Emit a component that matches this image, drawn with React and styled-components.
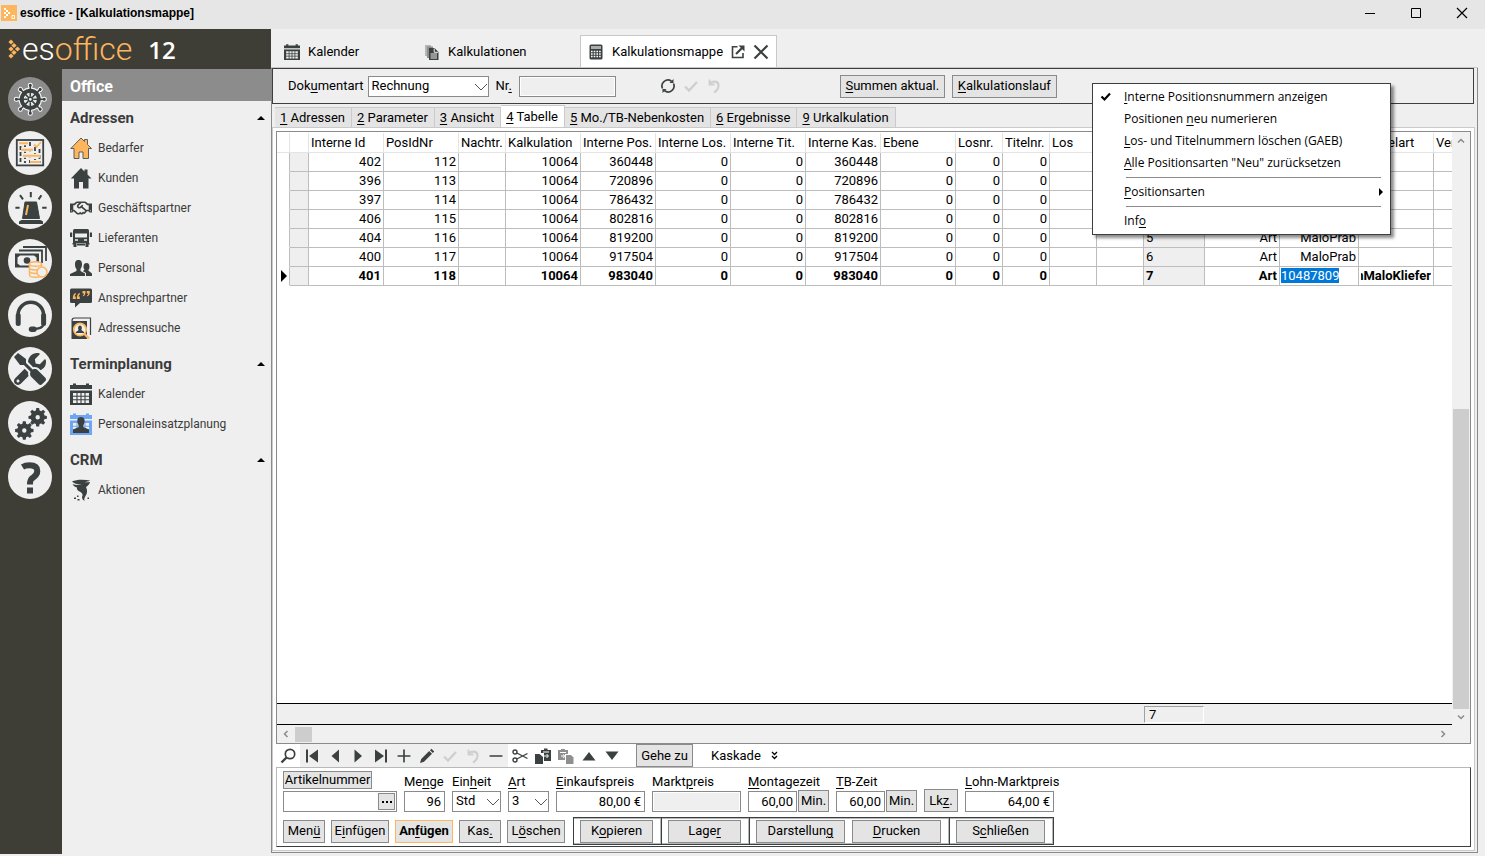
import React, { useState } from "react";
import styled, { createGlobalStyle, css } from "styled-components";
import { FaTools, FaRegHandshake } from "react-icons/fa";
import { Minus, Plus, Square, X } from "lucide-react";

const DARK = "#3b4140";
const ORANGE = "#fdb55e";

/* "&" marks the access key, as in the menu resources */
const Mnemonic = ({ text }) => {
  const at = text.indexOf("&");
  if (at < 0) return text;
  return (
    <span>
      {text.slice(0, at)}
      <u>{text[at + 1]}</u>
      {text.slice(at + 2)}
    </span>
  );
};

const Chevron = () => (
  <svg width="14" height="8" viewBox="0 0 14 8" fill="none" stroke="#555" strokeWidth="1">
    <path d="M1 1l6 6 6-6" />
  </svg>
);

const Gear = ({ cx, cy }) => (
  <g transform={`translate(${cx} ${cy})`}>
    <circle r="4.6" fill="none" stroke={DARK} strokeWidth="4.8" />
    {[0, 45, 90, 135, 180, 225, 270, 315].map((a) => (
      <path key={a} d="M-1.9 -6.4L-1.4 -9.2H1.4L1.9 -6.4Z" fill={DARK} transform={`rotate(${a})`} />
    ))}
  </g>
);

const WheelIcon = () => (
  <svg viewBox="0 0 44 44">
    {["#f4f4f4", DARK].map((color, i) => (
      <g key={color} stroke={color} fill="none" transform="translate(22.3 22.3)">
        <circle r="8.6" strokeWidth={i ? 4 : 6.2} />
        {[0, 45, 90, 135, 180, 225, 270, 315].map((a) => (
          <g key={a} transform={`rotate(${a})`}>
            <path d="M0 -3V-14" strokeWidth={i ? 1.6 : 3.8} />
            <circle cy="-14" r="0.8" strokeWidth={i ? 1.4 : 3.4} />
          </g>
        ))}
        <circle r="2.2" strokeWidth={i ? 1.6 : 3} />
      </g>
    ))}
    <circle cx="22.3" cy="22.3" r="1" fill="#f4f4f4" />
  </svg>
);

const PlanIcon = () => (
  <svg viewBox="0 0 44 44" fill="none">
    <rect x="8.8" y="9" width="26.4" height="25.4" stroke={DARK} strokeWidth="1.8" />
    <path d="M12.5 15V32M17 12V32M22 11V32M27 16V32M31.5 18V32" stroke={DARK} strokeWidth="1.8" strokeDasharray="4 2" />
    <path d="M11 12.2H20M13 18.7H25M15 24.8H32M22 31H32" stroke="#efefef" strokeWidth="4" />
    <path d="M11 12.2H20M13 18.7H25M15 24.8H32M22 31H32" stroke={ORANGE} strokeWidth="2" />
    <path d="M26 13.5L28.5 16L33 11" stroke={ORANGE} strokeWidth="1.8" />
  </svg>
);

const SirenIcon = () => (
  <svg viewBox="0 0 44 44" fill="none">
    <path d="M17 17H28.5L31.5 33.5H14.5Z" fill={DARK} stroke={DARK} strokeLinejoin="round" />
    <path d="M11 39V36.5L13.5 35H32.5L35 36.5V39Z" fill={DARK} />
    <path d="M20 20L18 30" stroke={ORANGE} strokeWidth="2" />
    <path d="M22.8 7V12.2M12 10.2L15 14.4M33.4 10.2L30.6 14.4M7.4 22.8H11.6M34.2 22.8H38.6" stroke={DARK} strokeWidth="2" />
  </svg>
);

const MoneyIcon = () => (
  <svg viewBox="0 0 44 44" fill="none">
    <path d="M15 8H38V22M11 11.5H34V24" stroke={DARK} strokeWidth="1.8" />
    <rect x="7" y="14.5" width="24" height="14" fill={DARK} />
    <path d="M9.5 18.5L12 16.5H26L28.5 18.5V24.5L26 26.5H12L9.5 24.5Z" fill="#efefef" />
    <circle cx="19" cy="21.5" r="3.3" fill={DARK} />
    <g fill="#efefef" stroke={ORANGE} strokeWidth="1.5">
      <path d="M21.5 25V36C21.5 39 33.5 39 33.5 36V25" />
      <ellipse cx="27.5" cy="25" rx="6" ry="2.3" />
      <path d="M21.5 29C21.5 31.5 33.5 31.5 33.5 29M21.5 32.5C21.5 35 33.5 35 33.5 32.5" fill="none" />
      <circle cx="34" cy="33" r="5" />
    </g>
  </svg>
);

const HeadsetIcon = () => (
  <svg viewBox="0 0 44 44" fill="none" stroke={DARK}>
    <path d="M10 27V22A12.8 12.8 0 0 1 35.6 22V27" strokeWidth="3.6" />
    <path d="M10.2 22.5V30.5M35.6 22.5V30.5" strokeWidth="5" strokeLinecap="round" />
    <path d="M35.6 31C35 35 30 36 25 36" strokeWidth="2.2" />
    <path d="M23.5 36.2H26" strokeWidth="5.4" strokeLinecap="round" />
  </svg>
);

const ToolsIcon = () => <FaTools size={32} color={DARK} />;

const GearsIcon = () => (
  <svg viewBox="0 0 44 44">
    <Gear cx={29.7} cy={16.3} />
    <Gear cx={16.3} cy={29.5} />
  </svg>
);

const HelpIcon = () => (
  <svg viewBox="0 0 44 44" fill="none" stroke={DARK} strokeWidth="6">
    <path d="M14.5 12C17 10.5 19 10.3 21.5 10.3C27 10.3 29.3 12.5 29.3 16C29.3 20 27 21.3 24.5 23C22.5 24.5 22 25.5 22 29.5" />
    <path d="M22 32.5V38.5" />
  </svg>
);

const House = ({ fill }) => (
  <svg viewBox="0 0 22 22">
    <path
      d="M11 1L0.8 11.5H4V21.5H9V15H13V21.5H18.5V11.5H21.5L17.5 7.5V2.5H14.5V4.5Z"
      fill={fill}
      stroke={DARK}
      strokeWidth={fill === ORANGE ? 0.8 : 0}
    />
  </svg>
);

const TruckIcon = () => (
  <svg viewBox="0 0 22 22" fill={DARK}>
    <path d="M4.5 2H17.5Q19 2 19 3.5V16H3V3.5Q3 2 4.5 2Z" />
    <path d="M5 6.5H17V10.5H5Z" fill="#efefef" />
    <path d="M5 13H8M14 13H17" stroke="#efefef" strokeWidth="1.5" />
    <path d="M0 5.5H2.2V10H0ZM19.8 5.5H22V10H19.8ZM2.5 16H6.5V20H3.5V17.5H2.5ZM15.5 16H19.5V17.5H18.5V20H15.5ZM7 16.5H15V18.5H7Z" />
  </svg>
);

const StaffIcon = () => (
  <svg viewBox="0 0 22 22" fill={DARK}>
    <path d="M8.5 3C11.3 3 12 5 12 7.5C12 10 11 11 10.5 12V14L15 16.5V19H0V17L6.5 14V12C5.5 11 5 10 5 7.5C5 5 5.7 3 8.5 3Z" />
    <path d="M16.5 6C19 6 19.5 8 19.5 10C19.5 12 18.5 12.5 18.3 13.5L22 16.5V19H16V16L13 14.2L14.5 12.5C13.5 11.5 13.5 10.5 13.5 9.5C13.5 7.5 14.5 6 16.5 6Z" />
  </svg>
);

const QuoteIcon = () => (
  <svg viewBox="0 0 22 22">
    <path d="M1.5 1.5H20.5Q22 1.5 22 3V14.5Q22 16 20.5 16H10L5 20.5V16H1.5Q0 16 0 14.5V3Q0 1.5 1.5 1.5Z" fill={DARK} />
    <path d="M5.5 6C3.5 7 2.8 8.5 2.8 12H5.8V9.5H4.5Q4.7 8 6 7ZM9.5 6C7.5 7 6.8 8.5 6.8 12H9.8V9.5H8.5Q8.7 8 10 7ZM12.5 4H15.5C15.5 7.5 15 8.5 12.8 9.5V8.5Q14 8 14 6.5H12.5ZM16.8 4H19.8C19.8 7.5 19.3 8.5 17 9.5V8.5Q18.3 8 18.3 6.5H16.8Z" fill={ORANGE} />
  </svg>
);

const SearchCardIcon = () => (
  <svg viewBox="0 0 22 22" fill="none">
    <path d="M2 4Q2 1 4.5 1H20.5V18" stroke={DARK} strokeWidth="1.2" />
    <path d="M1.5 4H17V22H1.5Z" fill={DARK} />
    <circle cx="10" cy="12.5" r="6.2" fill="#efefef" stroke={ORANGE} strokeWidth="1.8" />
    <path d="M14.5 17L19 21.5" stroke={ORANGE} strokeWidth="2.4" />
    <path d="M10 8.5C12 8.5 12.3 11.5 11.3 13L14 15V16H6V15L8.7 13C7.7 11.5 8 8.5 10 8.5Z" fill={DARK} />
  </svg>
);

const CalendarIcon = ({ color = DARK, person }) => (
  <svg viewBox="0 0 22 22" fill={color}>
    <path d="M0 2H3V0.5H6V2H16V0.5H19V2H22V6H0Z" />
    <path d="M0 7.5H22V22H0Z" />
    <path d="M3 10H19V20H3Z" fill="#efefef" />
    <path d="M2 13.3H20M2 16.7H20M7 9V21M11 9V21M15 9V21" stroke={color} strokeWidth="1.1" />
    {person && (
      <path
        d="M11 4C14.5 4 15 7 14.5 9.5C14 11.5 13.2 12 13.2 14L19 16.5V20H3V16.5L8.8 14C8.8 12 8 11.5 7.5 9.5C7 7 7.5 4 11 4Z"
        fill={DARK}
      />
    )}
  </svg>
);

const TornadoIcon = () => (
  <svg viewBox="0 0 22 22" fill={DARK}>
    <path d="M2 2.5C6 0.6 14 0.4 20 1.6C19 2.6 16 3 14 3.2C16.500 3.400 18.500 3.200 20 3C19.500 5.500 17.500 7 16 8C17.500 11 17.500 14.500 15.500 17C14.500 18.500 14 20 14.500 22C12 20.500 11.500 18.500 12.500 16.500C13 15 11.500 13.500 9.500 12.500C7.500 11.500 6.500 10 7 8.500C5 8 3 6.500 2.500 5C5 6 9 6.200 11.500 5.800C7.500 5.600 3.500 4.500 2 2.500Z" />
    <path d="M4 18.500H6V20H4ZM7.500 20H9.500V21.500H7.500ZM7 16.500H8.500V18H7ZM17.500 18.500H19V20H17.500Z" />
  </svg>
);

const CopyDocIcon = () => (
  <svg viewBox="0 0 16 16">
    <path d="M1 1H7V12H1Z" fill="#b5b5b5" />
    <path d="M3 2.5H9V14H3Z" fill="#8c8f8e" />
    <path d="M5 4H10.5L14.5 8V16H5Z" fill={DARK} />
    <path d="M10.2 4.5V8.3H14M6.5 10H13M6.5 12H13M6.5 14H13" stroke="#efefef" fill="none" />
  </svg>
);

const CalculatorIcon = () => (
  <svg viewBox="0 0 16 16">
    <rect x="1.5" y="0.5" width="13" height="15" rx="1.5" fill={DARK} />
    <path d="M3 2H13V5H3Z" fill="#a9adac" />
    <path d="M3 7.5H13M3 10H13M3 12.5H13" stroke="#fff" strokeWidth="1.5" strokeDasharray="1.6 1.1" />
  </svg>
);

const RefreshIcon = () => (
  <svg viewBox="0 0 16 16" fill="none" stroke={DARK} strokeWidth="1.7">
    <path d="M2.5 10.5A6 6 0 0 1 11.5 3.2M13.5 5.5A6 6 0 0 1 4.5 12.8" />
    <path d="M9.5 5H13.5V1ZM6.5 11H2.5V15Z" fill={DARK} stroke="none" />
  </svg>
);

const CheckIcon = () => (
  <svg viewBox="0 0 16 16" fill="none" stroke="#cfcfcf" strokeWidth="2.4">
    <path d="M2 8.5L6 12.5L14 4" />
  </svg>
);

const UndoIcon = () => (
  <svg viewBox="0 0 16 16" fill="none" stroke="#cfcfcf" strokeWidth="2.2">
    <path d="M3.500 5.500C7 2.500 12.500 3 12.500 7.500C12.500 10.500 10.500 13 8 14.500" />
    <path d="M3.5 1.5V6.500H8.5" strokeWidth="1.8" />
  </svg>
);

const LoupeIcon = () => (
  <svg viewBox="0 0 16 16" fill="none" stroke={DARK}>
    <circle cx="10" cy="6" r="4.7" strokeWidth="1.7" />
    <path d="M6.5 9.5L1.5 14.5" strokeWidth="2.4" />
  </svg>
);

const FirstIcon = () => (
  <svg viewBox="0 0 16 16" fill={DARK}>
    <path d="M2 1.5H4V14.5H2ZM14 1.5V14.5L5 8Z" />
  </svg>
);
const PrevIcon = () => (
  <svg viewBox="0 0 16 16" fill={DARK}>
    <path d="M12 1.5V14.5L4.5 8Z" />
  </svg>
);
const NextIcon = () => (
  <svg viewBox="0 0 16 16" fill={DARK}>
    <path d="M4.5 1.5V14.5L12 8Z" />
  </svg>
);
const LastIcon = () => (
  <svg viewBox="0 0 16 16" fill={DARK}>
    <path d="M12 1.5H14V14.5H12ZM2 1.5V14.5L11 8Z" />
  </svg>
);
const PencilIcon = () => (
  <svg viewBox="0 0 16 16" fill={DARK}>
    <path d="M1 15L2.2 11L10.2 3L13 5.8L5 13.8ZM11 2.2L12.5 0.8L15.2 3.5L13.8 5Z" />
  </svg>
);
const ScissorsIcon = () => (
  <svg viewBox="0 0 16 16" fill="none" stroke={DARK} strokeWidth="1.4">
    <circle cx="3" cy="4" r="2" />
    <circle cx="3" cy="12" r="2" />
    <path d="M4.8 5L15.5 10.5M4.8 11L15.5 5.5" />
  </svg>
);
const ClipIcon = ({ color = DARK, paste }) => (
  <svg viewBox="0 0 16 16" fill={color}>
    <path d={paste ? "M0 2H3V1H7V2H10V6H7V12H0Z" : "M6 2H9V0.5H12.5V2H16V13H9V5H6Z"} />
    <path d={paste ? "M8 7H13L15.5 9.5V16H8Z" : "M0 6H4.5L8 9V16H0Z"} />
    <path d={paste ? "M2 4.5H8M3 8H6M5 6.5L7 8.2L5 10" : "M8 4H14M9 8H13M11.5 6L13.5 8L11.5 10"} stroke="#fff" fill="none" />
  </svg>
);
const UpIcon = () => (
  <svg viewBox="0 0 16 16" fill={DARK}>
    <path d="M1.5 12.5H14.5L8 4Z" />
  </svg>
);
const DownIcon = () => (
  <svg viewBox="0 0 16 16" fill={DARK}>
    <path d="M1.5 3.5H14.5L8 12Z" />
  </svg>
);
const PlusIcon = () => <Plus size={20} color={DARK} />;
const MinusIcon = () => <Minus size={20} color={DARK} />;
const PasteIcon = () => <ClipIcon color="#8f8f8f" paste />;
const DetachIcon = () => (
  <svg width="14" height="14" viewBox="0 0 14 14" fill="none" stroke={DARK} strokeWidth="1.6">
    <path d="M6.5 1.8H1.5V12.5H12V8" />
    <path d="M5 9L11 3" strokeWidth="2.2" />
    <path d="M7.5 0.5H13.5V6.5Z" fill={DARK} stroke="none" />
  </svg>
);

const RAIL = [
  ["Office", WheelIcon],
  ["Planung", PlanIcon],
  ["Service", SirenIcon],
  ["Finanzen", MoneyIcon],
  ["Support", HeadsetIcon],
  ["Werkzeuge", ToolsIcon],
  ["Einstellungen", GearsIcon],
  ["Hilfe", HelpIcon],
];

const SECTIONS = [
  {
    title: "Adressen",
    items: [
      ["Bedarfer", <House fill={ORANGE} />],
      ["Kunden", <House fill={DARK} />],
      ["Geschäftspartner", <FaRegHandshake size={22} color={DARK} />],
      ["Lieferanten", <TruckIcon />],
      ["Personal", <StaffIcon />],
      ["Ansprechpartner", <QuoteIcon />],
      ["Adressensuche", <SearchCardIcon />],
    ],
  },
  {
    title: "Terminplanung",
    items: [
      ["Kalender", <CalendarIcon />],
      ["Personaleinsatzplanung", <CalendarIcon color="#6ea6f5" person />],
    ],
  },
  { title: "CRM", items: [["Aktionen", <TornadoIcon />]] },
];

const PAGES = ["&1 Adressen", "&2 Parameter", "&3 Ansicht", "&4 Tabelle", "&5 Mo./TB-Nebenkosten", "&6 Ergebnisse", "&9 Urkalkulation"];

const COLUMNS = [
  ["", 13],
  ["", 19],
  ["Interne Id", 75],
  ["PosIdNr", 75],
  ["Nachtr.", 47],
  ["Kalkulation", 75],
  ["Interne Pos.", 75],
  ["Interne Los.", 75],
  ["Interne Tit.", 75],
  ["Interne Kas.", 75],
  ["Ebene", 75],
  ["Losnr.", 47],
  ["Titelnr.", 47],
  ["Los", 47],
  ["", 47],
  ["", 61],
  ["", 75],
  ["", 79],
  ["Artikelart", 75],
  ["Ver", null],
];

const ROWS = [
  [402, 112, 360448],
  [396, 113, 720896],
  [397, 114, 786432],
  [406, 115, 802816],
  [404, 116, 819200, 5],
  [400, 117, 917504, 6],
  [401, 118, 983040, 7],
];

const NAV_LEFT = [
  ["Erster", FirstIcon],
  ["Zurück", PrevIcon],
  ["Weiter", NextIcon],
  ["Letzter", LastIcon],
  ["Neu", PlusIcon],
  ["Bearbeiten", PencilIcon],
  ["Übernehmen", CheckIcon],
  ["Verwerfen", UndoIcon],
  ["Entfernen", MinusIcon],
];
const NAV_RIGHT = [
  ["Ausschneiden", ScissorsIcon],
  ["Kopie", ClipIcon],
  ["Einsetzen", PasteIcon],
  ["Nach oben", UpIcon],
  ["Nach unten", DownIcon],
];

const Field = ({ label, id, width, select, value, disabled, unit }) => (
  <StField $width={width}>
    <label htmlFor={id}>
      <Mnemonic text={label} />
    </label>
    <StInline>
      {select ? (
        <StSelectWrap>
          <StSelect id={id} defaultValue={value}>
            <option>{value}</option>
          </StSelect>
          <Chevron />
        </StSelectWrap>
      ) : (
        <StInput id={id} defaultValue={value} disabled={disabled} />
      )}
      {unit && <StUnit>{unit}</StUnit>}
    </StInline>
  </StField>
);

const PositionTable = () => (
  <StTable>
    <colgroup>
      {COLUMNS.map(([, width], i) => (
        <StCol key={i} $width={width} />
      ))}
    </colgroup>
    <thead>
      <tr>
        {COLUMNS.map(([title], i) => (
          <th key={i}>{title}</th>
        ))}
      </tr>
    </thead>
    <tbody>
      {ROWS.map(([id, pos, interne, nr]) => {
        const current = id === 401;
        return (
          <StRow key={id} $current={current}>
            <StMarker>
              {current && (
                <svg width="6" height="12" viewBox="0 0 6 12">
                  <path d="M0 0L6 6L0 12Z" />
                </svg>
              )}
            </StMarker>
            <StFixed />
            <td>{id}</td>
            <td>{pos}</td>
            <td />
            <td>10064</td>
            <td>{interne}</td>
            <td>0</td>
            <td>0</td>
            <td>{interne}</td>
            <td>0</td>
            <td>0</td>
            <td>0</td>
            <td />
            <td />
            <StFixed>{nr}</StFixed>
            <td>{nr && "Art"}</td>
            {current ? (
              <StEditing>
                <mark>10487809</mark>
              </StEditing>
            ) : (
              <td>{nr && "MaloPrab"}</td>
            )}
            <td>{current && <StClip>nMaloKliefer</StClip>}</td>
            <td />
          </StRow>
        );
      })}
    </tbody>
  </StTable>
);

const ContextMenu = () => (
  <StMenu role="menu">
    <StMenuItem role="menuitem">
      <svg width="12" height="10" viewBox="0 0 12 10" fill="none" stroke="#000" strokeWidth="2.2">
        <path d="M1.5 4.5L4.5 7.5L10 1.5" />
      </svg>
      <Mnemonic text="&Interne Positionsnummern anzeigen" />
    </StMenuItem>
    <StMenuItem role="menuitem">
      <i />
      <Mnemonic text="Positionen &neu numerieren" />
    </StMenuItem>
    <StMenuItem role="menuitem">
      <i />
      <Mnemonic text="&Los- und Titelnummern löschen (GAEB)" />
    </StMenuItem>
    <StMenuItem role="menuitem">
      <i />
      <Mnemonic text={'&Alle Positionsarten "Neu" zurücksetzen'} />
    </StMenuItem>
    <StDivider />
    <StMenuItem role="menuitem">
      <i />
      <Mnemonic text="&Positionsarten" />
      <StSubArrow width="4" height="8" viewBox="0 0 4 8">
        <path d="M0 0L4 4L0 8Z" />
      </StSubArrow>
    </StMenuItem>
    <StDivider />
    <StMenuItem role="menuitem">
      <i />
      <Mnemonic text="Inf&o" />
    </StMenuItem>
  </StMenu>
);

const App = () => {
  const [page, setPage] = useState("&4 Tabelle");

  return (
    <>
      <GlobalStyle />
      <StWindow>
        <StTitleBar>
          <svg width="16" height="16" viewBox="0 0 16 16">
            <path d="M0 0H16V16H0Z" fill={ORANGE} />
            <path d="M3 3H5V5H3ZM5 5H7V7H5ZM7 7H9V9H7ZM3 7H5V9H3ZM5 9H7V11H5ZM3 11H5V13H3Z" fill="#fff" />
            <path d="M11 10.5H13.5V13.5H11Z" fill="none" stroke="#fff" />
          </svg>
          <h1>esoffice - [Kalkulationsmappe]</h1>
          <StCaption aria-label="Minimieren">
            <svg width="12" height="12" viewBox="0 0 12 12">
              <path d="M1 6.5H11" stroke="#000" />
            </svg>
          </StCaption>
          <StCaption aria-label="Maximieren">
            <svg width="12" height="12" viewBox="0 0 12 12">
              <path d="M1.5 1.5H10.5V10.5H1.5Z" fill="none" stroke="#000" />
            </svg>
          </StCaption>
          <StCaption aria-label="Fenster schließen">
            <svg width="12" height="12" viewBox="0 0 12 12">
              <path d="M1 1L11 11M11 1L1 11" stroke="#000" strokeWidth="1.2" />
            </svg>
          </StCaption>
        </StTitleBar>

        <StBody>
          <StSide>
            <StBrand>
              <svg width="14" height="20" viewBox="0 0 14 20" fill={ORANGE}>
                {[
                  [3, 3],
                  [6, 6.5],
                  [3, 10],
                  [9.5, 10],
                  [6, 13.5],
                  [3, 17],
                ].map(([x, y]) => (
                  <path key={`${x}-${y}`} d={`M${x} ${y - 2.6}L${x + 2.6} ${y}L${x} ${y + 2.6}L${x - 2.6} ${y}Z`} />
                ))}
              </svg>
              <span>
                es<em>office</em>
              </span>
              <strong>12</strong>
            </StBrand>
            <StSideBody>
              <StRail>
                {RAIL.map(([name, Icon], i) => (
                  <StRound key={name} aria-label={name} $active={i === 0}>
                    <Icon />
                  </StRound>
                ))}
              </StRail>
              <StNav>
                <h2>Office</h2>
                {SECTIONS.map((section) => (
                  <section key={section.title}>
                    <StHeading>
                      {section.title}
                      <svg width="8" height="4" viewBox="0 0 8 4">
                        <path d="M0 4L4 0L8 4Z" />
                      </svg>
                    </StHeading>
                    {section.items.map(([name, icon]) => (
                      <StLink key={name} href="#">
                        {icon}
                        {name}
                      </StLink>
                    ))}
                  </section>
                ))}
              </StNav>
            </StSideBody>
          </StSide>

          <StMain>
            <StTabs>
              <StTab $width={140}>
                <CalendarIcon />
                Kalender
              </StTab>
              <StTab $width={166}>
                <CopyDocIcon />
                Kalkulationen
              </StTab>
              <StTab as="div" $width={197} $active>
                <CalculatorIcon />
                Kalkulationsmappe
                <StTabButton aria-label="Ablösen">
                  <DetachIcon />
                </StTabButton>
                <StTabButton aria-label="Reiter schließen">
                  <svg width="16" height="16" viewBox="0 0 16 16">
                    <path d="M1.500 1.500L14.500 14.500M14.500 1.500L1.500 14.500" stroke={DARK} strokeWidth="2.2" />
                  </svg>
                </StTabButton>
              </StTab>
            </StTabs>

            <StFrame>
              <StToolbar>
                <label htmlFor="doctype">
                  <Mnemonic text="Dok&umentart" />
                </label>
                <StDocType>
                  <StSelect id="doctype">
                    <option>Rechnung</option>
                  </StSelect>
                  <Chevron />
                </StDocType>
                <label htmlFor="docnr">
                  <Mnemonic text="Nr&." />
                </label>
                <StDocNr>
                  <StInput id="docnr" disabled />
                </StDocNr>
                <StActions>
                  <StTool aria-label="Aktualisieren">
                    <RefreshIcon />
                  </StTool>
                  <StTool aria-label="Bestätigen">
                    <CheckIcon />
                  </StTool>
                  <StTool aria-label="Rückgängig">
                    <UndoIcon />
                  </StTool>
                </StActions>
                <StButton $width={105}>
                  <Mnemonic text="&Summen aktual." />
                </StButton>
                <StButton $width={105}>
                  <Mnemonic text="&Kalkulationslauf" />
                </StButton>
                <ContextMenu />
              </StToolbar>

              <StPages>
                {PAGES.map((name) => (
                  <StPageTab key={name} $active={name === page} onClick={() => setPage(name)}>
                    <Mnemonic text={name} />
                  </StPageTab>
                ))}
              </StPages>

              <StPage>
                <StGrid>
                  <StTableArea>
                    <PositionTable />
                  </StTableArea>
                  <StVScroll>
                    <svg width="8" height="6" viewBox="0 0 8 6" fill="none" stroke="#8a8a8a" strokeWidth="1.5">
                      <path d="M1 4.5L4 1.5L7 4.5" />
                    </svg>
                    <span />
                    <svg width="8" height="6" viewBox="0 0 8 6" fill="none" stroke="#8a8a8a" strokeWidth="1.5">
                      <path d="M1 1.5L4 4.5L7 1.5" />
                    </svg>
                  </StVScroll>
                  <StSummary>
                    <output>7</output>
                  </StSummary>
                  <StHScroll>
                    <svg width="6" height="8" viewBox="0 0 6 8" fill="none" stroke="#8a8a8a" strokeWidth="1.5">
                      <path d="M4.5 1L1.5 4L4.5 7" />
                    </svg>
                    <span />
                    <svg width="6" height="8" viewBox="0 0 6 8" fill="none" stroke="#8a8a8a" strokeWidth="1.5">
                      <path d="M1.5 1L4.5 4L1.5 7" />
                    </svg>
                  </StHScroll>
                </StGrid>

                <StNavigator>
                  <StTool aria-label="Suchen">
                    <LoupeIcon />
                  </StTool>
                  <StToolGroup>
                    {NAV_LEFT.map(([name, Icon]) => (
                      <StTool key={name} aria-label={name}>
                        <Icon />
                      </StTool>
                    ))}
                  </StToolGroup>
                  {NAV_RIGHT.map(([name, Icon]) => (
                    <StTool key={name} aria-label={name}>
                      <Icon />
                    </StTool>
                  ))}
                  <StGoto $width={57}>Gehe zu</StGoto>
                  <StCascade>
                    Kaskade
                    <svg width="7" height="9" viewBox="0 0 7 9" fill="none" stroke="#000" strokeWidth="1.3">
                      <path d="M1 1L3.5 3.5L6 1M1 5L3.5 7.5L6 5" />
                    </svg>
                  </StCascade>
                </StNavigator>

                <StForm>
                  <StFields>
                    <StArticle>
                      <StArticleButton>Artikelnummer</StArticleButton>
                      <StLookup>
                        <input aria-label="Artikelnummer" />
                        <button aria-label="Artikel auswählen">
                          <svg width="10" height="2" viewBox="0 0 10 2">
                            <path d="M0 0H2V2H0ZM4 0H6V2H4ZM8 0H10V2H8Z" />
                          </svg>
                        </button>
                      </StLookup>
                    </StArticle>
                    <Field id="menge" label="Me&nge" width={41} value="96" />
                    <Field id="einheit" label="Ein&heit" width={49} value="Std" select />
                    <Field id="art" label="&Art" width={41} value="3" select />
                    <Field id="ek" label="&Einkaufspreis" width={89} value="80,00 €" />
                    <Field id="mp" label="Markt&preis" width={89} disabled />
                    <Field id="mz" label="&Montagezeit" width={81} value="60,00" unit="Min." />
                    <Field id="tb" label="&TB-Zeit" width={81} value="60,00" unit="Min." />
                    <StButton $width={34}>
                      <Mnemonic text="Lk&z." />
                    </StButton>
                    <Field id="lmp" label="&Lohn-Marktpreis" width={89} value="64,00 €" />
                  </StFields>
                  <StButtons>
                    <StButton $width={42}>
                      <Mnemonic text="Men&ü" />
                    </StButton>
                    <StButton $width={58}>
                      <Mnemonic text="E&infügen" />
                    </StButton>
                    <StButton $width={58} $default>
                      <Mnemonic text="An&fügen" />
                    </StButton>
                    <StButton $width={42}>
                      <Mnemonic text="Kas&." />
                    </StButton>
                    <StButton $width={58}>
                      <Mnemonic text="L&öschen" />
                    </StButton>
                    <StGroups>
                      <StGroup>
                        <StButton $width={73}>
                          <Mnemonic text="K&opieren" />
                        </StButton>
                      </StGroup>
                      <StGroup>
                        <StButton $width={73}>
                          <Mnemonic text="Lage&r" />
                        </StButton>
                      </StGroup>
                      <StGroup>
                        <StButton $width={89}>
                          <Mnemonic text="Darstellun&g" />
                        </StButton>
                        <StButton $width={89}>
                          <Mnemonic text="&Drucken" />
                        </StButton>
                      </StGroup>
                      <StGroup>
                        <StButton $width={89}>
                          <Mnemonic text="S&chließen" />
                        </StButton>
                      </StGroup>
                    </StGroups>
                  </StButtons>
                </StForm>
              </StPage>
            </StFrame>
          </StMain>
        </StBody>
      </StWindow>
    </>
  );
};
export default App;

const GlobalStyle = createGlobalStyle`
  * {
    box-sizing: border-box;
  }
  body {
    margin: 0;
    background: #efefef;
    color: #000;
    font: 13px/16px Roboto, "Liberation Sans", sans-serif;
  }
  button, input, select {
    font: inherit;
    color: inherit;
    margin: 0;
    padding: 0;
    border-radius: 0;
  }
  h1, h2, h3 {
    margin: 0;
  }
  svg {
    flex: none;
    display: block;
  }
  u {
    text-underline-offset: 2px;
  }
`;

const StWindow = styled.div`
  display: flex;
  flex-direction: column;
  min-height: 100vh;
`;

const StTitleBar = styled.header`
  display: flex;
  align-items: center;
  height: 29px;
  padding: 0 0 4px 1px;
  background: #e6e6e6;
  h1 {
    flex: 1;
    margin-left: 3px;
    font: bold 12px/16px "Liberation Sans", Arial, sans-serif;
  }
`;

const StCaption = styled.button`
  display: flex;
  align-items: center;
  justify-content: center;
  width: 46px;
  height: 24px;
  border: 0;
  background: none;
`;

const StBody = styled.div`
  display: flex;
  flex: 1;
`;

const StSide = styled.aside`
  display: flex;
  flex-direction: column;
  width: 271px;
  flex: none;
`;

const StBrand = styled.div`
  display: flex;
  align-items: center;
  height: 40px;
  padding-left: 8px;
  background: #3e3e36;
  color: #fff;
  span {
    font-size: 32px;
    font-weight: 300;
    line-height: 40px;
  }
  em {
    font-style: normal;
    color: ${ORANGE};
  }
  strong {
    margin-left: 16px;
    padding-top: 2px;
    font: 600 24px/38px "Open Sans", sans-serif;
  }
`;

const StSideBody = styled.div`
  display: flex;
  flex: 1;
`;

const StRail = styled.nav`
  display: flex;
  flex-direction: column;
  align-items: center;
  gap: 10px;
  width: 62px;
  margin-bottom: 2px;
  padding: 8px 2px 0 0;
  background: #3e3e36;
`;

const StRound = styled.button`
  display: flex;
  align-items: center;
  justify-content: center;
  width: 44px;
  height: 44px;
  border: 0;
  border-radius: 50%;
  background: ${({ $active }) => ($active ? "#8c8c8c" : "#efefef")};
`;

const StNav = styled.nav`
  flex: 1;
  h2 {
    height: 32px;
    margin-bottom: 1px;
    padding: 2px 0 0 8px;
    background: #8c8c8c;
    color: #fff;
    font-size: 16px;
    font-weight: 700;
    line-height: 32px;
  }
  section + section {
    margin-top: 5px;
  }
`;

const StHeading = styled.h3`
  display: flex;
  align-items: center;
  justify-content: space-between;
  height: 31px;
  padding: 0 6px 0 8px;
  color: #3b3b3b;
  font-size: 15px;
  font-weight: 700;
`;

const StLink = styled.a`
  display: flex;
  align-items: center;
  gap: 6px;
  height: 30px;
  padding-left: 8px;
  color: #3b3b3b;
  font-size: 12px;
  text-decoration: none;
  svg {
    width: 22px;
    height: 22px;
  }
`;

const StMain = styled.main`
  display: flex;
  flex-direction: column;
  flex: 1;
  min-width: 0;
  padding: 0 7px 3px 0;
`;

const StTabs = styled.div`
  display: flex;
  align-items: flex-end;
  height: 39px;
  padding-left: 3px;
  border-bottom: 1px solid #c8c8c8;
`;

const StTab = styled.button`
  display: flex;
  align-items: center;
  gap: 8px;
  width: ${({ $width }) => $width}px;
  height: 32px;
  padding: 2px 0 0 10px;
  border: 0;
  background: none;
  > svg {
    width: 16px;
    height: 16px;
  }
  ${({ $active }) =>
    $active &&
    css`
      padding: 1px 0 0 7px;
      border: 1px solid #c8c8c8;
      border-bottom: 0;
      background: #fff;
    `}
`;

const StTabButton = styled.button`
  border: 0;
  background: none;
`;

const StFrame = styled.div`
  display: flex;
  flex-direction: column;
  flex: 1;
  border: 1px solid #8a8a8a;
  border-top: 0;
`;

const StToolbar = styled.div`
  position: relative;
  display: flex;
  align-items: center;
  gap: 7px;
  height: 36px;
  margin-right: 3px;
  padding-left: 15px;
  border: 1px solid #3c3f3f;
  label:first-child {
    margin-right: -3px;
  }
`;

const StDocType = styled.div`
  position: relative;
  width: 121px;
  > svg {
    position: absolute;
    top: 7px;
    right: 1px;
    pointer-events: none;
  }
`;

const StDocNr = styled.div`
  display: flex;
  width: 97px;
`;

const StActions = styled.div`
  display: flex;
  width: 210px;
  padding-left: 34px;
`;

const StTool = styled.button`
  display: flex;
  align-items: center;
  justify-content: center;
  width: 23px;
  height: 23px;
  border: 0;
  background: none;
  svg {
    width: 16px;
    height: 16px;
  }
  svg.lucide {
    width: 20px;
    height: 20px;
  }
`;

const StButton = styled.button`
  width: ${({ $width }) => $width}px;
  height: 23px;
  border: 1px solid #8a8a8a;
  background: #e4e4e4;
  white-space: nowrap;
  ${({ $default }) =>
    $default &&
    css`
      border-color: ${ORANGE};
      font-weight: 700;
    `}
`;

const StMenu = styled.div`
  position: absolute;
  z-index: 5;
  top: 14px;
  left: 819px;
  width: 299px;
  padding: 2px 1px;
  border: 1px solid #3c3f3f;
  background: #fff;
  box-shadow: 3px 3px 3px rgba(0, 0, 0, 0.45);
  font: 12px/22px "Open Sans", "Noto Sans", sans-serif;
`;

const StMenuItem = styled.button`
  display: grid;
  grid-template-columns: 24px 1fr auto;
  align-items: center;
  width: 100%;
  height: 22px;
  padding: 0 6px;
  border: 0;
  background: none;
  text-align: left;
`;

const StSubArrow = styled.svg`
  justify-self: end;
`;

const StDivider = styled.hr`
  height: 1px;
  margin: 3px 8px 3px 32px;
  border: 0;
  background: #8a8a8a;
`;

const StPages = styled.div`
  display: flex;
  align-items: flex-end;
  height: 23px;
  padding-left: 3px;
`;

const StPageTab = styled.button`
  height: 20px;
  padding: 0 6px 0 5px;
  border: 1px solid #cacaca;
  border-width: 1px 1px 0 0;
  background: #e4e4e4;
  white-space: nowrap;
  ${({ $active }) =>
    $active &&
    css`
      height: 22px;
      background: #fff;
    `}
`;

const StPage = styled.div`
  display: flex;
  flex-direction: column;
  flex: 1;
  margin: 0 2px 1px 0;
  padding: 3px;
  border: 1px solid #cacaca;
  background: #fff;
`;

const StGrid = styled.div`
  display: grid;
  grid-template-columns: minmax(0, 1fr) 18px;
  grid-template-rows: 1fr 22px 18px;
  flex: 1;
  border: 1px solid #8a8a8a;
`;

const StTableArea = styled.div`
  overflow: hidden;
  padding-top: 1px;
`;

const StTable = styled.table`
  width: 100%;
  table-layout: fixed;
  border-collapse: separate;
  border-spacing: 0;
  th,
  td {
    height: 19px;
    overflow: hidden;
    padding: 0 2px;
    border: 1px solid #bdbdbd;
    border-width: 0 1px 1px 0;
    line-height: 18px;
    white-space: nowrap;
    text-align: right;
  }
  th {
    height: 20px;
    border-color: #e4e4e4;
    font-weight: 400;
    text-align: left;
  }
  th:last-child,
  td:last-child {
    padding-right: 0;
    border-right: 0;
  }
`;

const StCol = styled.col`
  width: ${({ $width }) => ($width ? `${$width}px` : "auto")};
`;

const StRow = styled.tr`
  font-weight: ${({ $current }) => ($current ? 700 : 400)};
`;

const StMarker = styled.td`
  && {
    border-bottom-color: transparent;
    padding: 0 4px;
  }
`;

const StFixed = styled.td`
  && {
    background: #efefef;
    text-align: left;
  }
`;

const StEditing = styled.td`
  && {
    padding: 0 1px;
    font-weight: 400;
    text-align: left;
  }
  mark {
    background: #0078d7;
    color: #fff;
  }
`;

const StClip = styled.div`
  display: flex;
  justify-content: flex-end;
  overflow: hidden;
`;

const StVScroll = styled.div`
  display: flex;
  flex-direction: column;
  align-items: center;
  justify-content: space-between;
  grid-row: 1 / 3;
  grid-column: 2;
  padding: 6px 1px 5px;
  background: #f0f0f0;
  span {
    width: 16px;
    height: 300px;
    margin: auto 0 5px;
    background: #cdcdcd;
  }
`;

const StSummary = styled.div`
  display: flex;
  border: 1px solid #000;
  border-width: 1px 0;
  background: #efefef;
  output {
    width: 60px;
    height: 17px;
    margin: 2px 0 0 867px;
    padding-left: 4px;
    border: 1px solid #a0a0a0;
    border-color: #a0a0a0 #fff #fff #a0a0a0;
  }
`;

const StHScroll = styled.div`
  display: flex;
  align-items: center;
  grid-column: 1 / 3;
  padding: 0 24px 0 6px;
  background: #f0f0f0;
  span {
    width: 17px;
    height: 15px;
    margin: 0 auto 0 6px;
    background: #cdcdcd;
  }
`;

const StNavigator = styled.div`
  display: flex;
  height: 23px;
`;

const StToolGroup = styled.div`
  display: flex;
  margin-left: 1px;
  padding-right: 1px;
  background: #efefef;
`;

const StGoto = styled(StButton)`
  margin-left: 13px;
`;

const StCascade = styled.button`
  display: flex;
  align-items: center;
  gap: 10px;
  margin-left: 18px;
  border: 0;
  background: none;
`;

const StForm = styled.form`
  padding: 3px 0 1px 6px;
  border: 1px solid #3c3f3f;
  border-top-color: #b8b8b8;
  border-left-color: #b8b8b8;
`;

const StFields = styled.div`
  display: flex;
  align-items: flex-end;
  gap: 7px;
`;

const StField = styled.div`
  display: flex;
  flex-direction: column;
  width: ${({ $width }) => $width}px;
  white-space: nowrap;
`;

const StInline = styled.div`
  display: flex;
  align-items: center;
  height: 22px;
`;

const inputBox = css`
  width: 100%;
  min-width: 0;
  height: 21px;
  border: 1px solid #8a8a8a;
  background: #fff;
`;

const StInput = styled.input`
  ${inputBox}
  padding: 0 3px;
  text-align: right;
  &:disabled {
    background: #efefef;
    box-shadow: inset 0 0 0 1px #fff;
  }
`;

const StSelectWrap = styled.div`
  position: relative;
  width: 100%;
  > svg {
    position: absolute;
    top: 7px;
    right: 1px;
    pointer-events: none;
  }
`;

const StSelect = styled.select`
  ${inputBox}
  display: block;
  padding: 0 3px;
  appearance: none;
`;

const StUnit = styled.span`
  flex: none;
  width: 31px;
  height: 22px;
  margin-left: 1px;
  border: 1px solid #8a8a8a;
  background: #e4e4e4;
  line-height: 20px;
  text-align: center;
`;

const StArticle = styled.div`
  display: flex;
  flex-direction: column;
  gap: 2px;
  width: 114px;
`;

const StArticleButton = styled.button`
  width: 89px;
  height: 18px;
  border: 1px solid #8a8a8a;
  background: #e4e4e4;
  line-height: 16px;
`;

const StLookup = styled.div`
  display: flex;
  height: 21px;
  padding: 1px;
  border: 1px solid #8a8a8a;
  input {
    flex: 1;
    min-width: 0;
    border: 0;
  }
  button {
    display: flex;
    align-items: center;
    justify-content: center;
    width: 17px;
    border: 1px solid #8a8a8a;
    background: #e4e4e4;
  }
`;

const StButtons = styled.div`
  display: flex;
  align-items: center;
  gap: 6px;
  margin-top: 5px;
`;

const StGroups = styled.div`
  display: flex;
  margin-left: 2px;
  border-right: 1px solid #3c3f3f;
`;

const StGroup = styled.div`
  display: flex;
  align-items: center;
  gap: 7px;
  height: 28px;
  padding: 0 8px 0 6px;
  border: 1px solid #3c3f3f;
  border-right: 0;
  box-shadow: inset -1px -1px 0 #b8b8b8, inset 0 1px 0 #b8b8b8;
`;
